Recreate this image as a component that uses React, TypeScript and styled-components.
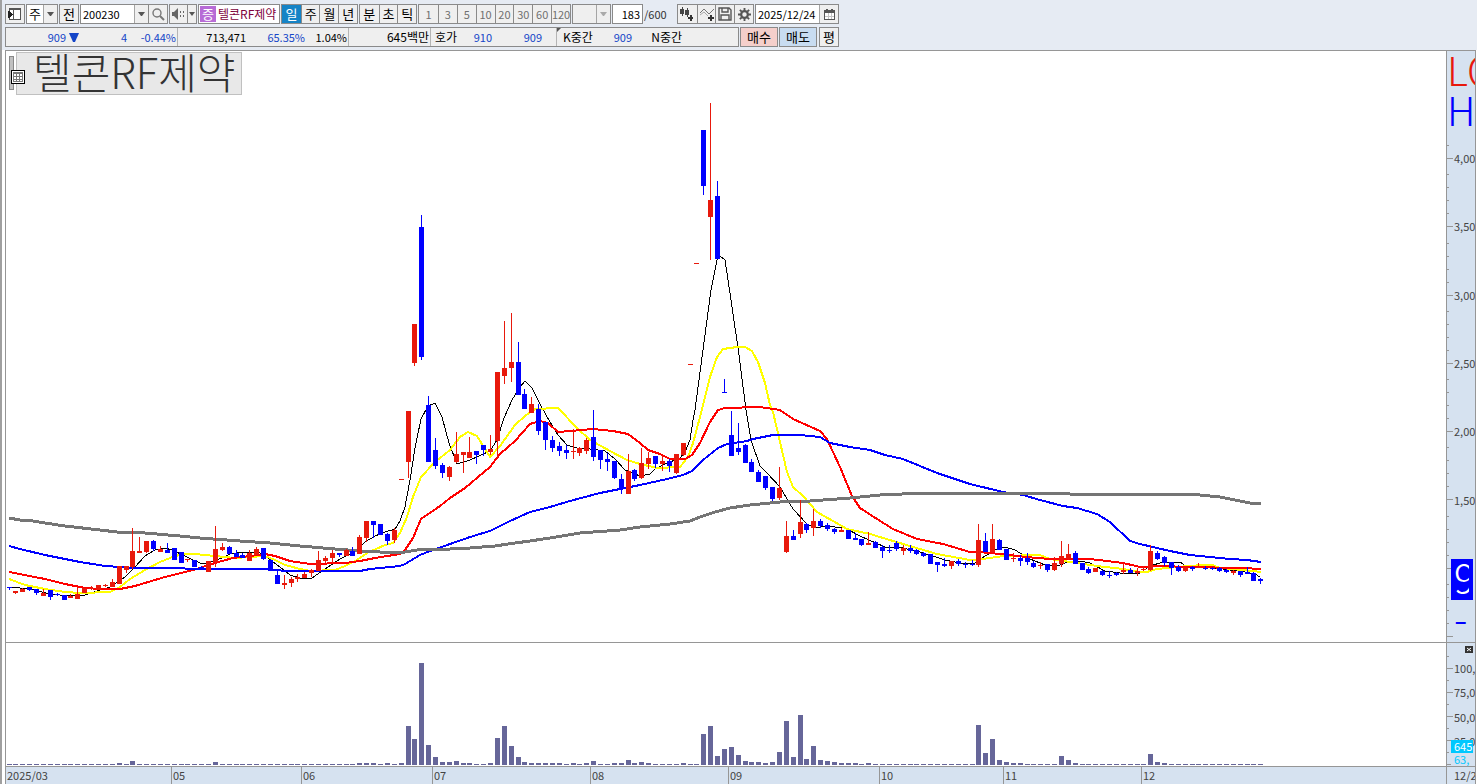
import React from 'react';
import styled, { createGlobalStyle } from 'styled-components';

const GlobalStyle = createGlobalStyle`
  * { box-sizing: border-box; }
  html, body { margin: 0; }
  body, button, input, select {
    font-family: 'Noto Sans CJK KR', sans-serif;
    font-size: 13px;
    line-height: 16px;
    color: #000;
  }
`;

const edge = '#8a8a8a';
const axisBlue = '#d6e2f0';
const RED = '#e8190c';
const BLUE = '#0000ff';

const Page = styled.div`
  display: flex;
  flex-direction: column;
  min-height: 100vh;
  border-left: 2px solid #a0a0a0;
  background: #fff;
`;

const Header = styled.header`
  display: flex;
  flex-direction: column;
  gap: 3px;
  height: 50px;
  padding: 4px 0 3px 3px;
  background: #e6ebf3;
  overflow: hidden;
`;

const Bar = styled.div`
  display: flex;
  gap: 1px;
  height: 20px;
  white-space: nowrap;
`;

const Group = styled.div<{ $w?: number; $bg?: string }>`
  display: flex;
  flex: none;
  width: ${(p) => (p.$w ? `${p.$w}px` : 'auto')};
  height: 20px;
  border: 1px solid ${edge};
  background: ${(p) => p.$bg || '#efefef'};
  overflow: hidden;
`;

const ToolButton = styled.button<{ $w?: number; $bg?: string }>`
  display: flex;
  flex: none;
  align-items: center;
  justify-content: center;
  width: ${(p) => p.$w || 20}px;
  height: 20px;
  padding: 0;
  border: 1px solid ${edge};
  background: ${(p) => p.$bg || '#efefef'};
`;

const Segment = styled.button<{ $active?: boolean; $muted?: boolean; $w?: number }>`
  display: flex;
  flex: 0 1 ${(p) => p.$w || 19}px;
  align-items: center;
  justify-content: center;
  min-width: 0;
  height: 18px;
  padding: 0;
  border: 0;
  background: ${(p) => (p.$active ? '#1583c6' : '#efefef')};
  color: ${(p) => (p.$active ? '#fff' : p.$muted ? '#707070' : '#000')};
  font-size: ${(p) => (p.$muted ? 11 : 13)}px;
  & + & { border-left: 1px solid ${edge}; }
`;

const DropButton = styled(Segment)`
  flex-shrink: 0;
  border-left: 1px solid #a5a5a5;
`;

const Select = styled.select`
  flex: 1;
  min-width: 0;
  height: 18px;
  padding: 0 2px;
  border: 0;
  appearance: none;
  background: #fff;
  &:disabled { background: #efefef; opacity: 1; }
`;

const Field = styled.input<{ $right?: boolean }>`
  flex: 1;
  min-width: 0;
  height: 18px;
  padding: 0 2px;
  border: 0;
  background: #fff;
  font-size: 11px;
  text-align: ${(p) => (p.$right ? 'right' : 'left')};
`;

const Badge = styled.span`
  flex: none;
  width: 16px;
  margin: 1px 2px 1px 1px;
  background: #b76bd6;
  color: #fff;
  text-align: center;
`;

const StockName = styled.span`
  color: #80003c;
  font-size: 12px;
  line-height: 18px;
`;

const Total = styled.span`
  width: 32px;
  color: #333;
  font-size: 11px;
  line-height: 20px;
`;

const Quotes = styled.div`
  display: flex;
  flex: none;
  width: 734px;
  height: 20px;
  border: 1px solid ${edge};
  background: #efefef;
`;

const Quote = styled.span<{ $w: number; $blue?: boolean; $line?: boolean; $left?: boolean; $text?: boolean }>`
  flex: none;
  width: ${(p) => p.$w}px;
  padding: 0 1px 0 2px;
  border-right: ${(p) => (p.$line ? '1px solid #b4b4b4' : '0')};
  color: ${(p) => (p.$blue ? '#1445c8' : '#000')};
  font-size: ${(p) => (p.$text ? 12 : 11)}px;
  line-height: 18px;
  text-align: ${(p) => (p.$left ? 'left' : 'right')};
`;

const FallMark = styled.span`
  display: flex;
  flex: none;
  align-items: center;
  width: 13px;
  padding-left: 2px;
`;

const Mark = styled.svg`
  flex: none;
  display: block;
`;

const Workspace = styled.main`
  display: grid;
  flex: 1;
  grid-template-columns: 1fr 30px;
  grid-template-rows: 591fr 124fr 18px;
  margin: 0 1px 0 3px;
  border-top: 1px solid #969696;
  border-left: 1px solid #969696;
`;

const Plot = styled.section<{ $line?: boolean }>`
  position: relative;
  display: flex;
  min-width: 0;
  min-height: 0;
  border-top: ${(p) => (p.$line ? '1px solid #969696' : '0')};
`;

const Canvas = styled.svg`
  display: block;
  flex: 1;
  width: 0;
  height: 100%;
`;

const Axis = styled.aside<{ $line?: boolean }>`
  position: relative;
  display: flex;
  flex-direction: column;
  border: 0 solid #969696;
  border-width: ${(p) => (p.$line ? '1px' : '0')} 1px 0 1px;
  background: ${axisBlue};
  color: #444;
  font-size: 11px;
  overflow: hidden;
`;

const Ticks = styled.svg`
  position: absolute;
  inset: 0;
  width: 100%;
  height: 100%;
`;

const Spacer = styled.div<{ $grow: number }>`
  flex: ${(p) => p.$grow} 1 0;
`;

const Labels = styled.div<{ $grow: number }>`
  display: flex;
  flex: ${(p) => p.$grow} 1 0;
  flex-direction: column;
`;

const Label = styled.div`
  display: flex;
  flex: 1 1 0;
  align-items: center;
  padding-left: 7px;
`;

const BigTag = styled.div<{ $top: number; $color: string; $bg?: string; $inset?: boolean }>`
  position: absolute;
  top: ${(p) => p.$top}px;
  left: ${(p) => (p.$inset ? 4 : 0)}px;
  right: ${(p) => (p.$inset ? 2 : 0)}px;
  height: 41px;
  padding-left: ${(p) => (p.$inset ? 3 : 0)}px;
  border-right: ${(p) => (p.$inset ? `4px solid ${p.$bg || 'transparent'}` : '0')};
  background: ${(p) => p.$bg || 'transparent'};
  color: ${(p) => p.$color};
  font-size: 40px;
  font-weight: 300;
  line-height: 35px;
  overflow: hidden;
  white-space: nowrap;
`;

const VolumeTag = styled.div<{ $bottom: number; $solid?: boolean }>`
  position: absolute;
  bottom: ${(p) => p.$bottom}px;
  left: 4px;
  right: 2px;
  height: 13px;
  padding-left: 3px;
  background: ${(p) => (p.$solid ? '#00c8ff' : axisBlue)};
  color: ${(p) => (p.$solid ? '#fff' : '#00c8ff')};
  line-height: 13px;
  overflow: hidden;
`;

const CloseButton = styled.button`
  position: absolute;
  top: 3px;
  right: 2px;
  width: 8px;
  height: 7px;
  padding: 0;
  border: 0;
  background: #333;
`;

const Title = styled.h1`
  position: absolute;
  top: 1px;
  left: 10px;
  width: 226px;
  height: 43px;
  margin: 0;
  padding-left: 16px;
  border: 1px solid #c0c0c0;
  background: #e8e8e8;
  color: #333;
  font-size: 42px;
  font-weight: 300;
  line-height: 36px;
  white-space: nowrap;
`;

const Handle = styled.span`
  position: absolute;
  top: 5px;
  left: 3px;
  width: 5px;
  height: 34px;
  border: 1px solid #888;
  background: #c0c0c0;
`;

const GridButton = styled.button`
  position: absolute;
  top: 19px;
  left: 5px;
  display: flex;
  width: 14px;
  height: 14px;
  padding: 1px;
  border: 1px solid #000;
  background: #fff;
`;

const TimeAxis = styled.footer`
  display: flex;
  border-top: 1px solid #969696;
  background: ${axisBlue};
  color: #444;
  font-size: 11px;
`;

const Month = styled.span<{ $grow: number }>`
  flex: ${(p) => p.$grow} 1 0;
  padding-left: 1px;
  line-height: 16px;
  & + & { border-left: 1px solid #969696; }
`;

const TimeEnd = styled.div`
  padding-left: 7px;
  border: 1px solid #969696;
  border-bottom: 0;
  background: ${axisBlue};
  color: #444;
  font-size: 11px;
  line-height: 16px;
  overflow: hidden;
`;

// [rising, body top, body bottom, high, low]
type Candle = [number, number, number, number, number];
const candles: Candle[] = [
  [0,587,588,587,590],[1,591,593,591,594],[1,589,592,588,592],[0,587,590,587,591],[0,589,593,589,595],
  [1,593,596,589,596],[0,590,597,590,600],[0,594,595,593,596],[0,595,600,595,600],[1,596,598,594,598],
  [1,594,599,587,599],[1,588,593,588,593],[1,588,589,586,590],[1,585,590,585,590],[1,585,586,584,587],
  [1,582,587,579,587],[1,566,584,566,584],[1,566,570,566,573],[1,551,567,528,569],[1,551,553,537,553],
  [1,541,552,541,553],[0,541,549,540,551],[1,549,552,546,552],[0,550,553,543,553],[0,548,560,548,560],
  [0,552,563,552,563],[1,559,560,559,562],[0,560,567,560,567],[0,567,568,566,569],[1,561,572,561,572],
  [1,549,562,526,567],[1,547,550,543,551],[0,547,554,546,554],[0,553,557,550,557],[0,555,558,553,558],
  [1,553,561,550,561],[1,549,555,547,555],[0,548,559,548,560],[0,560,571,559,571],[0,575,584,571,584],
  [1,583,585,575,589],[1,579,583,577,587],[1,577,579,574,582],[1,574,578,572,578],[1,570,573,569,577],
  [1,560,571,551,571],[1,558,561,556,563],[1,553,558,550,563],[0,553,555,553,557],[1,550,556,549,556],
  [0,551,556,547,556],[1,537,554,535,554],[1,521,538,521,542],[0,521,525,521,538],[0,524,535,524,535],
  [0,534,541,533,545],[1,530,540,528,543],[1,479,480,479,480],[1,411,462,411,478],[1,324,363,324,366],
  [0,227,357,215,360],[0,405,462,396,462],[0,450,466,438,469],[0,465,473,463,478],[1,467,477,466,481],
  [1,454,462,432,463],[1,452,455,452,473],[1,452,458,437,458],[0,451,455,451,464],[0,445,450,445,456],
  [1,449,452,435,455],[1,372,441,372,458],[1,368,376,321,384],[1,362,368,313,382],[0,362,395,342,395],
  [0,394,409,389,409],[1,404,413,397,413],[0,409,431,404,435],[0,422,440,422,450],[0,440,448,436,452],
  [0,446,451,442,456],[0,450,453,445,459],[1,451,452,429,459],[1,448,453,447,456],[1,440,451,438,454],
  [0,437,457,410,461],[0,450,460,450,469],[0,459,462,453,471],[0,461,478,461,479],[0,479,489,474,494],
  [1,471,494,454,494],[0,470,479,469,481],[1,463,478,448,479],[1,458,464,452,469],[0,456,464,456,468],
  [1,461,464,455,471],[0,461,466,459,472],[1,454,473,454,474],[1,443,455,443,456],[1,364,365,364,365],
  [1,263,264,263,264],[0,130,186,130,195],[1,200,217,103,260],[0,196,259,181,259],[0,392,393,379,393],
  [0,435,456,411,456],[0,448,452,423,455],[0,445,463,444,463],[0,462,472,459,472],[0,472,482,470,482],
  [0,476,488,476,490],[0,487,499,487,501],[1,488,498,467,500],[1,536,552,521,553],[0,536,540,530,540],
  [1,522,534,500,538],[0,524,530,523,533],[1,521,528,509,536],[0,521,526,519,528],[0,525,529,523,531],
  [0,529,532,528,534],[1,530,532,528,532],[0,530,539,530,539],[0,538,540,533,540],[0,539,545,539,546],
  [1,543,545,532,545],[0,542,548,541,548],[0,547,551,545,558],[0,550,551,545,553],[0,543,549,541,551],
  [1,548,551,545,555],[0,548,551,545,553],[0,550,554,549,555],[0,553,556,552,557],[0,554,564,554,564],
  [0,562,565,562,572],[0,564,566,558,567],[1,561,566,561,569],[0,561,564,559,566],[0,564,565,562,568],
  [0,564,565,560,566],[1,540,565,524,567],[0,541,552,533,552],[1,539,552,524,553],[0,540,550,539,550],
  [0,549,560,549,560],[1,558,559,553,562],[0,558,561,555,566],[0,558,562,553,565],[0,563,567,561,568],
  [1,565,566,562,569],[0,564,570,564,572],[1,563,570,557,571],[1,556,564,541,567],[1,554,559,544,560],
  [0,553,564,551,564],[0,563,570,563,570],[0,569,573,567,574],[1,568,572,568,572],[0,571,575,570,576],
  [0,575,576,571,578],[0,573,575,572,576],[1,570,572,563,574],[0,570,573,568,573],[1,571,573,568,576],
  [1,569,570,566,571],[1,551,570,545,571],[0,553,559,551,560],[0,557,563,556,566],[0,562,568,562,575],
  [0,567,571,565,572],[1,567,571,566,572],[0,567,569,566,571],[1,567,568,563,568],[0,568,569,566,570],
  [0,568,569,567,570],[0,568,571,567,572],[0,570,572,569,573],[1,571,573,570,575],[0,571,575,571,577],
  [0,572,574,567,574],[0,573,581,572,581],[0,579,581,578,584],
];

// Trading volume of the busier sessions, by session index
const volume: Record<number, number> = {
  16:2,18:4,30:3,51:2,52:2,53:2,55:2,57:2,58:39,59:26,60:102,61:20,62:8,63:3,64:3,65:4,66:2,67:2,70:2,
  71:27,72:39,73:19,74:8,75:3,76:2,77:2,78:2,79:2,80:2,82:2,84:2,85:4,88:2,89:2,90:5,91:2,92:3,93:2,98:2,
  101:31,102:39,103:9,104:16,105:18,106:10,107:4,108:3,109:3,110:2,111:3,112:13,113:44,114:8,115:50,
  116:6,117:19,118:5,119:4,120:3,121:2,122:2,123:2,125:2,141:40,142:12,143:26,144:5,145:3,146:2,147:2,
  153:9,154:5,155:2,166:11,167:3,168:2,
};

const averages = [
  { color: '#000', width: 1, points: '9,587 30,589 50,594 70,596 85,595 100,590 110,587 125,577 135,567 145,556 155,550 165,548 172,550 185,556 195,561 203,564 215,561 230,554 245,552 260,553 268,558 280,567 290,575 303,579 312,578 325,569 340,559 350,554 357,549 365,542 375,536 385,532 395,529 400,521 405,507 410,480 415,448 421,419 428,406 435,403 442,417 449,443 457,464 470,460 490,451 497,440 504,418 512,400 520,387 525,381 532,388 540,404 550,422 558,435 567,445 577,448 590,449 605,451 615,459 625,470 640,476 650,474 655,469 665,464 680,458 685,452 690,440 693,420 695,410 703,350 711,290 717,260 720,256 725,260 731,300 739,355 746,410 751,440 760,466 767,473 780,487 793,509 807,524 815,528 825,526 845,528 860,536 885,547 903,548 920,552 945,560 965,564 975,563 985,556 997,549 1005,547 1015,550 1030,559 1045,565 1060,565 1070,561 1080,561 1090,563 1105,571 1120,573 1140,573 1150,566 1163,562 1180,562 1187,567 1215,568 1230,570 1245,572 1255,574 1260,577' },
  { color: '#ffff00', width: 2, points: '9,579 25,585 45,589 65,592 80,593 110,592 120,587 130,579 145,570 160,562 175,556 185,554 195,554 215,556 235,558 265,556 275,560 285,565 300,569 310,571 335,570 345,566 357,560 367,553 385,545 393,543 400,533 407,517 413,497 421,477 435,462 450,450 460,437 468,432 477,436 490,457 500,446 515,425 525,416 535,409 558,408 577,428 590,440 610,451 627,460 640,464 657,468 680,467 688,457 693,443 700,417 710,377 717,357 723,349 737,347 745,347 752,351 758,362 765,383 770,405 773,412 780,442 787,472 793,487 803,496 817,512 840,525 847,529 870,534 903,544 937,554 970,560 983,559 1003,556 1040,555 1050,559 1070,562 1097,566 1123,569 1140,572 1147,572 1157,569 1177,567 1203,565 1212,565 1220,568 1243,570 1261,572' },
  { color: '#ff0000', width: 2, points: '9,572 45,579 65,584 85,588 100,589 120,589 135,586 165,577 193,570 215,563 233,558 250,556 265,554 275,556 290,561 310,564 345,563 360,561 375,558 400,554 405,550 413,538 421,519 440,506 450,498 465,488 490,467 500,454 515,441 530,424 540,421 548,423 558,432 570,431 593,429 613,431 628,434 640,443 648,450 660,454 670,459 685,459 692,455 700,443 710,422 718,410 725,408 760,407 780,410 793,419 820,431 827,439 833,452 840,467 852,496 860,508 877,519 893,529 917,539 943,544 970,552 978,552 1000,554 1017,556 1037,558 1050,559 1090,559 1107,561 1123,563 1140,567 1163,566 1187,567 1243,568 1261,569' },
  { color: '#0000ff', width: 2, points: '9,546 20,549 45,555 65,559 80,562 105,566 135,568 180,568 190,569 268,569 285,571 360,571 370,569 400,566 405,564 420,555 430,551 450,544 470,537 490,531 510,521 530,512 550,507 570,501 600,493 620,489 640,485 667,479 683,475 692,471 703,460 718,448 727,444 747,441 753,439 773,435 800,435 820,437 830,443 850,447 870,450 885,455 903,459 920,466 937,473 970,484 1003,492 1023,495 1040,500 1063,506 1077,508 1097,514 1110,522 1130,541 1140,544 1170,551 1190,555 1230,559 1247,560 1261,562' },
  { color: '#757575', width: 3, points: '9,518 20,520 33,521 45,523 65,526 100,530 117,532 145,533 180,536 200,538 240,541 270,543 300,546 335,549 360,551 380,552 405,552 417,550 430,549 450,549 470,548 495,546 515,543 530,541 550,538 580,533 620,530 640,527 670,524 690,521 700,517 715,512 730,508 750,505 780,502 810,501 850,498 880,495 925,493 965,493 975,494 990,493 1040,493 1070,494 1190,494 1200,495 1220,497 1235,500 1250,503 1261,504' },
];

const sessionX = (i: number) => Math.floor(9.08 + 6.878 * i);
const priceMajors = [158, 226, 295, 363, 431, 499, 568, 636];
const volumeMajors = [668, 692, 716, 740, 764];

const Arrow = ({ muted }: { muted?: boolean }) => (
  <Mark width="8" height="5" viewBox="0 0 8 5"><path d="M0 0h7L4 4H3z" fill={muted ? '#aaa' : '#555'} /></Mark>
);

const Calendar = () => (
  <Mark width="11" height="11" viewBox="0 0 11 11" shapeRendering="crispEdges">
    <path d="M0 1h11v10H0zM2 0h2v1H2zM7 0h2v1H7z" fill="#555" />
    <path d="M1 4h9v6H1z" fill="#fff" />
    <path d="M4 4h1v6H4zM7 4h1v6H7zM1 7h9v1H1z" fill="#c4c4c4" />
  </Mark>
);

function PriceChart() {
  return (
    <Canvas viewBox="6 51 1440 591" preserveAspectRatio="none" shapeRendering="crispEdges" role="img" aria-label="텔콘RF제약 주가">
      {averages.map((a) => (
        <polyline key={a.color} points={a.points} fill="none" stroke={a.color} strokeWidth={a.width} />
      ))}
      {candles.map(([up, top, bottom, high, low], i) => {
        const x = sessionX(i);
        return (
          <g key={i} fill={up ? RED : BLUE}>
            <rect x={x} y={high} width={1} height={low - high} />
            <rect x={x - 2} y={top} width={5} height={bottom - top} />
          </g>
        );
      })}
    </Canvas>
  );
}

function VolumeChart() {
  return (
    <Canvas viewBox="6 643 1440 123" preserveAspectRatio="none" shapeRendering="crispEdges" role="img" aria-label="거래량">
      {candles.map((_, i) => {
        const h = volume[i] || 1;
        return <rect key={i} x={sessionX(i) - 2} y={765 - h} width={5} height={h} fill="#666699" />;
      })}
    </Canvas>
  );
}

export default function App() {
  return (
    <Page>
      <GlobalStyle />
      <Header>
        <Bar>
          <ToolButton aria-label="창 전환">
            <Mark width="14" height="14" viewBox="0 0 14 14" shapeRendering="crispEdges">
              <path d="M1 1h12v12H1z" fill="#555" />
              <path d="M2 3h3v9H2zM6 3h6v9H6z" fill="#fff" />
              <path d="M0 4h1l4 3v1l-4 3H0z" fill="#222" />
            </Mark>
          </ToolButton>
          <Group $w={32}>
            <Select aria-label="종목 구분" defaultValue="주"><option>주</option></Select>
            <DropButton $w={14} aria-label="열기"><Arrow /></DropButton>
          </Group>
          <ToolButton>전</ToolButton>
          <Group $w={88}>
            <Field aria-label="종목코드" defaultValue="200230" />
            <DropButton $w={14} aria-label="종목 목록"><Arrow /></DropButton>
            <DropButton $w={19} aria-label="종목 검색">
              <Mark width="13" height="13" viewBox="0 0 13 13"><circle cx="5" cy="5" r="4" fill="none" stroke="#777" strokeWidth="1.4" /><path d="M8 8l4 4" stroke="#777" strokeWidth="2" /></Mark>
            </DropButton>
          </Group>
          <Group $w={28}>
            <Segment $w={17} aria-label="소리">
              <Mark width="13" height="12" viewBox="0 0 13 12"><path d="M0 4h2l4-4v12L2 8H0z" fill="#666" /><path d="M8 3h1v2H8zM8 7h1v2H8zM11 3h1v2h-1zM11 7h1v2h-1z" fill="#666" /></Mark>
            </Segment>
            <DropButton $w={9} aria-label="소리 설정"><Mark width="6" height="4" viewBox="0 0 6 4"><path d="M0 0h6L3 4z" fill="#555" /></Mark></DropButton>
          </Group>
          <Group $w={82} $bg="#fff"><Badge>증</Badge><StockName>텔콘RF제약</StockName></Group>
          <Group $w={77}>
            {['일', '주', '월', '년'].map((t) => <Segment key={t} $active={t === '일'}>{t}</Segment>)}
          </Group>
          <Group $w={58}>
            {['분', '초', '틱'].map((t) => <Segment key={t}>{t}</Segment>)}
          </Group>
          <Group $w={153}>
            {['1', '3', '5', '10', '20', '30', '60', '120'].map((t) => <Segment key={t} $muted>{t}</Segment>)}
          </Group>
          <Group $w={39}>
            <Select aria-label="주기" disabled />
            <DropButton $w={14} disabled aria-label="주기 열기"><Arrow muted /></DropButton>
          </Group>
          <Group $w={31}><Field $right aria-label="조회 개수" defaultValue="183" /></Group>
          <Total>/600</Total>
          <Group $w={77}>
            <Segment aria-label="차트 추가">
              <Mark width="16" height="16" viewBox="0 0 16 16" shapeRendering="crispEdges"><path d="M1 3h4v5H1zM3 1h1v9H3zM6 4h4v5H6zM8 2h1v9H8z" fill="#444" /><path d="M9 12h5M12 9v6" stroke="#333" strokeWidth="2" /></Mark>
            </Segment>
            <Segment aria-label="지표 추가">
              <Mark width="16" height="16" viewBox="0 0 16 16"><path d="M1 7l4-4 5 5 5-5" fill="none" stroke="#777" /><path d="M1 9l4-3 4 4" fill="none" stroke="#aaa" /><path d="M9 12h6M12 9v6" stroke="#333" strokeWidth="2" /></Mark>
            </Segment>
            <Segment aria-label="저장">
              <Mark width="14" height="14" viewBox="0 0 14 14"><path d="M1 1h10l2 2v10H1zM4 1v4h6V1M3 13V8h8v5" fill="none" stroke="#555" strokeWidth="1.4" /></Mark>
            </Segment>
            <Segment aria-label="설정">
              <Mark width="13" height="13" viewBox="0 0 14 14"><circle cx="7" cy="7" r="3.600" fill="none" stroke="#555" strokeWidth="2.400" /><path d="M7 0v3M7 11v3M0 7h3M11 7h3M2 2l2 2M10 10l2 2M12 2l-2 2M4 10l-2 2" stroke="#555" strokeWidth="2" /></Mark>
            </Segment>
          </Group>
          <Group $w={84}>
            <Field aria-label="조회일" defaultValue="2025/12/24" />
            <DropButton aria-label="달력"><Calendar /></DropButton>
          </Group>
        </Bar>
        <Bar>
          <Quotes>
            <Quote $w={61} $blue>909</Quote>
            <FallMark><Mark width="10" height="9" viewBox="0 0 10 9"><path d="M0 0h10L6 9H4z" fill="#1445c8" /></Mark></FallMark>
            <Quote $w={48} $blue>4</Quote>
            <Quote $w={50} $blue $line>-0.44%</Quote>
            <Quote $w={69}>713,471</Quote>
            <Quote $w={59} $blue>65.35%</Quote>
            <Quote $w={43} $line>1.04%</Quote>
            <Quote $w={82} $line $text>645백만</Quote>
            <Quote $w={27} $text>호가</Quote>
            <Quote $w={35} $blue>910</Quote>
            <Quote $w={50} $blue>909</Quote>
            <Quote $w={14} $line />
            <Mark width="4" height="4" viewBox="0 0 4 4"><path d="M0 0h4L0 4z" fill="#555" /></Mark>
            <Quote $w={32} $left $text>K중간</Quote>
            <Quote $w={40} $blue>909</Quote>
            <Quote $w={50} $text>N중간</Quote>
          </Quotes>
          <ToolButton $w={38} $bg="#f5cfcb">매수</ToolButton>
          <ToolButton $w={38} $bg="#c8dcf1">매도</ToolButton>
          <span />
          <ToolButton>평</ToolButton>
        </Bar>
      </Header>
      <Workspace>
        <Plot>
          <PriceChart />
          <Handle />
          <Title>텔콘RF제약</Title>
          <GridButton aria-label="표 보기">
            <Mark width="10" height="10" viewBox="0 0 10 10" shapeRendering="crispEdges"><path d="M0 0h10v10H0z" fill="#777" /><path d="M1 2h2v2H1zM4 2h2v2H4zM7 2h2v2H7zM1 5h2v2H1zM4 5h2v2H4zM7 5h2v2H7zM1 8h2v1H1zM4 8h2v1H4zM7 8h2v1H7z" fill="#fff" /></Mark>
          </GridButton>
        </Plot>
        <Axis>
          <Ticks viewBox="1447 51 28 591" preserveAspectRatio="none" shapeRendering="crispEdges">
            {priceMajors.map((y) => (
              <g key={y} fill="#969696">
                <rect x={1447} y={y} width={6} height={1} />
                {[13, 26, 39, 52].map((d) => (y - d > 140 ? <rect key={d} x={1447} y={y - d} width={2} height={1} /> : null))}
              </g>
            ))}
          </Ticks>
          <Spacer $grow={73} />
          <Labels $grow={410}>
            {['4,000', '3,500', '3,000', '2,500', '2,000', '1,500'].map((t) => <Label key={t}>{t}</Label>)}
          </Labels>
          <Spacer $grow={108} />
          <BigTag $top={1} $color={RED}>LC</BigTag>
          <BigTag $top={41} $color={BLUE}>HC</BigTag>
          <BigTag $top={508} $color="#fff" $bg="#0000ff" $inset>9</BigTag>
          <BigTag $top={549} $color={BLUE} $inset>-1</BigTag>
        </Axis>
        <Plot $line><VolumeChart /></Plot>
        <Axis $line>
          <Ticks viewBox="1447 643 28 123" preserveAspectRatio="none" shapeRendering="crispEdges">
            {volumeMajors.map((y) => (
              <g key={y} fill="#969696">
                <rect x={1447} y={y} width={6} height={1} />
                <rect x={1447} y={y - 12} width={2} height={1} />
              </g>
            ))}
          </Ticks>
          <Spacer $grow={13} />
          <Labels $grow={97}>
            {['100,000', '75,000', '50,000', '25,000'].map((t) => <Label key={t}>{t}</Label>)}
          </Labels>
          <Spacer $grow={13} />
          <VolumeTag $bottom={13} $solid>645</VolumeTag>
          <VolumeTag $bottom={0}>63,</VolumeTag>
          <CloseButton aria-label="닫기">
            <Mark width="8" height="7" viewBox="0 0 8 7"><path d="M2 2l4 3M6 2L2 5" stroke="#fff" /></Mark>
          </CloseButton>
        </Axis>
        <TimeAxis>
          <Month $grow={164}>2025/03</Month>
          <Month $grow={128}>05</Month>
          <Month $grow={129}>06</Month>
          <Month $grow={156}>07</Month>
          <Month $grow={136}>08</Month>
          <Month $grow={149}>09</Month>
          <Month $grow={122}>10</Month>
          <Month $grow={136}>11</Month>
          <Month $grow={303}>12</Month>
        </TimeAxis>
        <TimeEnd>12/24</TimeEnd>
      </Workspace>
    </Page>
  );
}
